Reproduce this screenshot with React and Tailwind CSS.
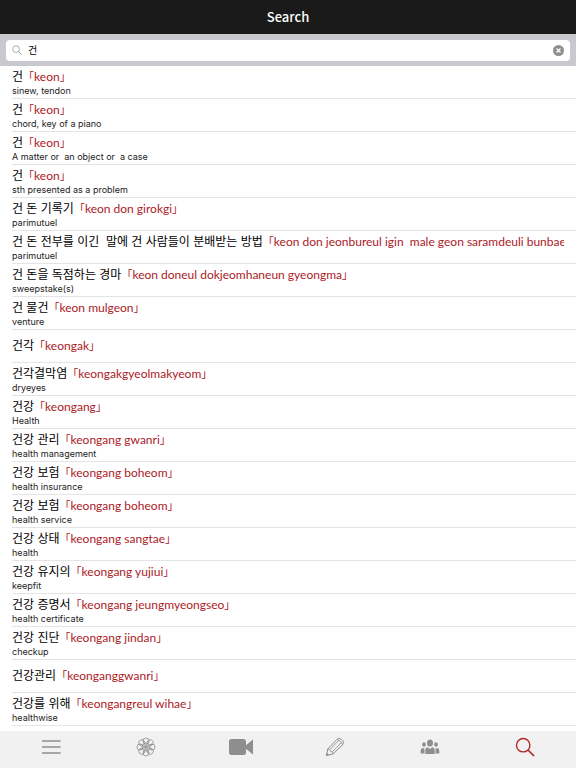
import React, { useState } from 'react'

const words = [
  { ko: '건', rom: 'keon', en: 'sinew, tendon' },
  { ko: '건', rom: 'keon', en: 'chord, key of a piano' },
  { ko: '건', rom: 'keon', en: 'A matter or  an object or  a case' },
  { ko: '건', rom: 'keon', en: 'sth presented as a problem' },
  { ko: '건 돈 기록기', rom: 'keon don girokgi', en: 'parimutuel' },
  {
    ko: '건 돈 전부를 이긴  말에 건 사람들이 분배받는 방법',
    rom: 'keon don jeonbureul igin  male geon saramdeuli bunbae',
    en: 'parimutuel',
  },
  { ko: '건 돈을 독점하는 경마', rom: 'keon doneul dokjeomhaneun gyeongma', en: 'sweepstake(s)' },
  { ko: '건 물건', rom: 'keon mulgeon', en: 'venture' },
  { ko: '건각', rom: 'keongak', en: '' },
  { ko: '건각결막염', rom: 'keongakgyeolmakyeom', en: 'dryeyes' },
  { ko: '건강', rom: 'keongang', en: 'Health' },
  { ko: '건강 관리', rom: 'keongang gwanri', en: 'health management' },
  { ko: '건강 보험', rom: 'keongang boheom', en: 'health insurance' },
  { ko: '건강 보험', rom: 'keongang boheom', en: 'health service' },
  { ko: '건강 상태', rom: 'keongang sangtae', en: 'health' },
  { ko: '건강 유지의', rom: 'keongang yujiui', en: 'keepfit' },
  { ko: '건강 증명서', rom: 'keongang jeungmyeongseo', en: 'health certificate' },
  { ko: '건강 진단', rom: 'keongang jindan', en: 'checkup' },
  { ko: '건강관리', rom: 'keonganggwanri', en: '' },
  { ko: '건강를 위해', rom: 'keongangreul wihae', en: 'healthwise' },
]

const MenuIcon = () => (
  <svg viewBox="0 0 20 20" className="w-5 h-5" stroke="currentColor" strokeWidth="1.3">
    <path d="M1 4h18.5M1 10h18.5M1 16h18.5" />
  </svg>
)

// eight overlapping petals around the centre
const FlowerIcon = () => (
  <svg viewBox="0 0 20 20" className="w-5 h-5" fill="none" stroke="currentColor" strokeWidth="0.8">
    {[0, 45, 90, 135, 180, 225, 270, 315].map((angle) => (
      <g key={angle} transform={`rotate(${angle} 10 10)`}>
        <circle cx="10" cy="4" r="3" />
        <path d="M10 10Q6.6 7.4 7.2 4M10 10q3.4-2.6 2.8-6" strokeWidth="0.4" />
      </g>
    ))}
    <circle cx="10" cy="10" r="1.6" strokeWidth="0.4" />
  </svg>
)

const VideoIcon = () => (
  <svg viewBox="0 0 26 18" className="w-[26px] h-[18px]" fill="currentColor">
    <rect x="1" y="1" width="17" height="16" rx="2.5" />
    <path d="M17 8l8-6.5v15L17 10z" />
  </svg>
)

const PencilIcon = () => (
  <svg viewBox="0 0 20 20" className="w-5 h-5" fill="none" stroke="currentColor" strokeWidth="1" strokeLinejoin="round">
    <path d="M1.5 18.5l1.3-6.5L12 2.3q2.2-2 4.6 0l1.2 1.2q1.8 2-.1 4.2L8 17z" />
    <path d="M2.8 12l2 .5.9 1.9 1.7.5.6 2.1M5 12.5l9-9.5M7.3 14.9l9.4-9.6M12 2.3q4 .9 5.6 5.3" strokeWidth="0.8" />
    <path d="M1.5 18.5l.5-2 1.4 1.4z" fill="currentColor" />
  </svg>
)

const GroupIcon = () => (
  <svg viewBox="0 0 20 20" className="w-5 h-5" fill="currentColor">
    <ellipse cx="10" cy="6" rx="3" ry="3.5" />
    <ellipse cx="4" cy="7.5" rx="1.8" ry="2.3" />
    <ellipse cx="16" cy="7.5" rx="1.8" ry="2.3" />
    <path d="M5.3 17v-4q0-2.6 2.4-2.8L10 12l2.3-1.8q2.4.2 2.4 2.8v4z" />
    <path d="M.7 16.5v-3q0-2.5 2-2.5l1.8.7v4.8zM19.3 16.5v-3q0-2.5-2-2.5l-1.8.7v4.8z" />
  </svg>
)

const SearchIcon = ({ className }) => (
  <svg viewBox="0 0 20 20" className={className} fill="none" stroke="currentColor">
    <circle cx="8.2" cy="8.2" r="6.7" strokeWidth="1.4" />
    <path d="M13 13l6 6" strokeWidth="1.7" />
  </svg>
)

const tabs = [
  { label: 'Menu', icon: <MenuIcon /> },
  { label: 'Themes', icon: <FlowerIcon /> },
  { label: 'Videos', icon: <VideoIcon /> },
  { label: 'Write', icon: <PencilIcon /> },
  { label: 'Community', icon: <GroupIcon /> },
  { label: 'Search', icon: <SearchIcon className="w-5 h-5" />, active: true },
]

const WordRow = ({ word }) => (
  <li className={`h-[33px] shrink-0 pr-3 flex flex-col justify-center border-b border-[#e4e4e6] ${word.en ? 'pt-0.5' : ''}`}>
    <p className="h-4 font-['Liberation_Sans','Noto_Sans_CJK_KR',sans-serif] text-[12px] leading-4 whitespace-pre overflow-hidden text-black">
      {word.ko}
      <span className="font-['Lato','Noto_Sans_CJK_KR',sans-serif] text-[#ac201f]">
        <span className="text-[11px]">「</span>
        {word.rom}
        <span className="text-[11px]">」</span>
      </span>
    </p>
    {word.en && (
      <p className="font-['Inter',sans-serif] text-[9px] leading-3 whitespace-pre text-[#222]">{word.en}</p>
    )}
  </li>
)

const App = () => {
  const [query, setQuery] = useState('건')

  return (
    <div className="h-screen flex flex-col bg-white font-['Noto_Sans_CJK_KR',sans-serif]">
      <header className="h-[34px] shrink-0 flex items-center justify-center bg-[#1a1a1a]">
        <h1 className="text-[13px] leading-4 font-medium text-white">Search</h1>
      </header>

      {/* Search bar */}
      <div className="h-8 shrink-0 px-1.5 flex items-center bg-[#c9c8ce]">
        <div className="w-full h-[21px] px-1.5 flex items-center gap-1.5 rounded bg-white">
          <SearchIcon className="w-2.5 h-2.5 text-[#8e8e93]" />
          <input
            type="text"
            aria-label="Search words"
            value={query}
            onChange={(e) => setQuery(e.target.value)}
            className="flex-1 min-w-0 h-4 text-[10px] leading-4 text-black outline-none"
          />
          <button type="button" aria-label="Clear" onClick={() => setQuery('')}>
            <svg viewBox="0 0 11 11" className="w-[11px] h-[11px]">
              <circle cx="5.5" cy="5.5" r="5.5" fill="#8e8e93" />
              <path d="M3.5 3.5l4 4M7.5 3.5l-4 4" stroke="#fff" strokeWidth="1.3" />
            </svg>
          </button>
        </div>
      </div>

      {/* Results */}
      <ul className="flex-1 min-h-0 pl-3 flex flex-col overflow-hidden">
        {words.map((word, i) => (
          <WordRow key={i} word={word} />
        ))}
      </ul>

      {/* Tab bar */}
      <nav className="h-[37px] shrink-0 px-1 grid grid-cols-6 bg-[#f1f1f1]">
        {tabs.map(({ label, icon, active }) => (
          <button
            key={label}
            type="button"
            aria-label={label}
            className={`pb-1.5 flex items-center justify-center ${active ? 'text-[#b02a28]' : 'text-[#8e8e8e]'}`}
          >
            {icon}
          </button>
        ))}
      </nav>
    </div>
  )
}

export default App
